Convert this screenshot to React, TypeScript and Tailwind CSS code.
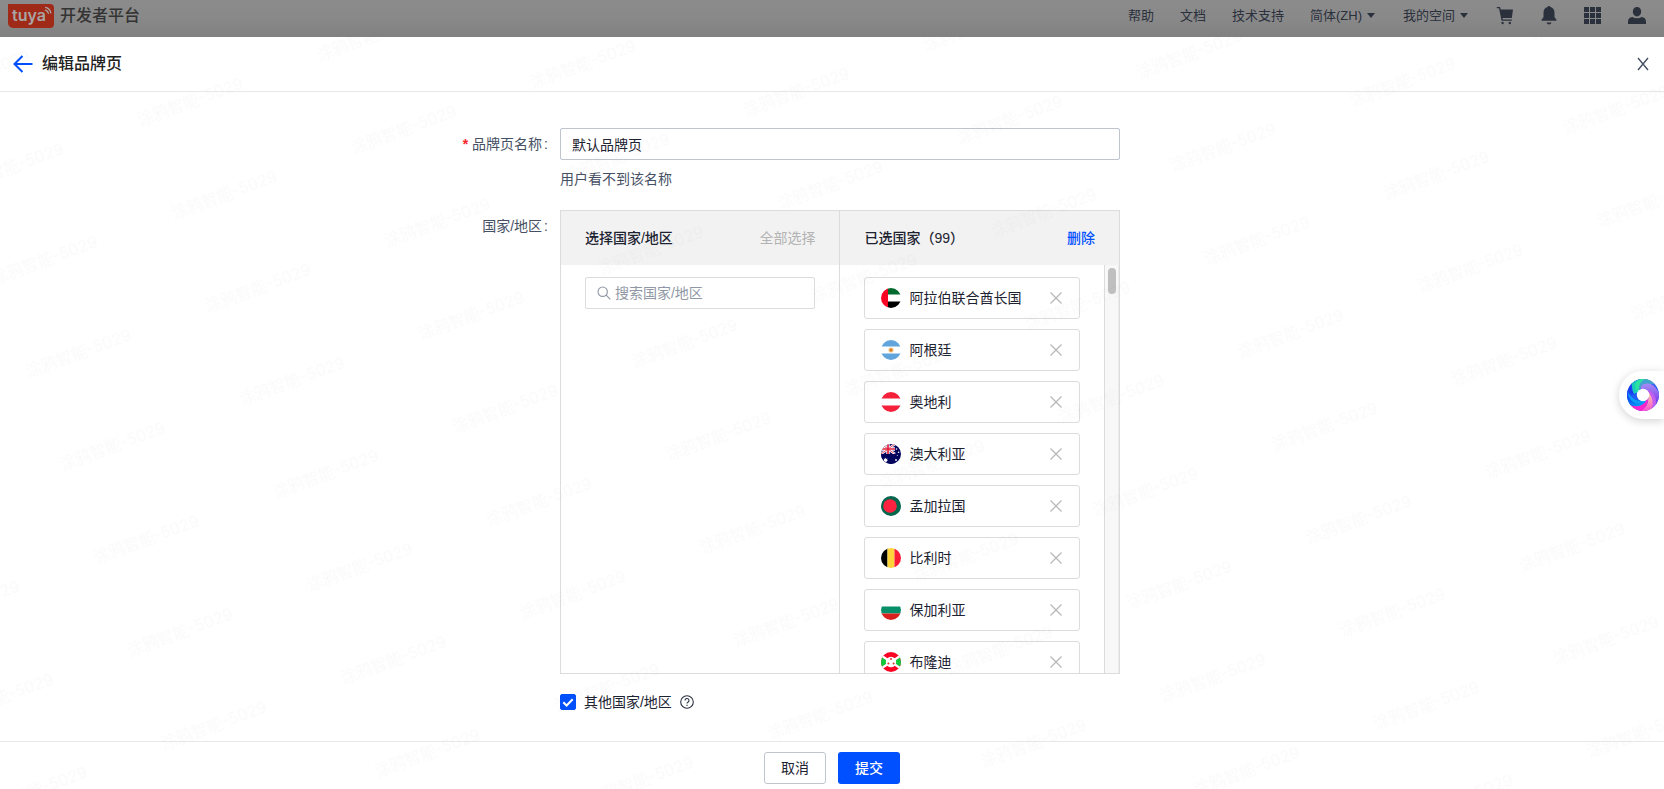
import { useState } from 'react';
import type { ReactNode } from 'react';

type Country = {
    name: string;
    flag: ReactNode;
};

const navLinks = ['帮助', '文档', '技术支持'];
const navMenus = ['简体(ZH)', '我的空间'];

const initialCountries: Country[] = [
    {
        name: '阿拉伯联合酋长国',
        flag: (
            <>
                <path fill="#fff" d="M0 0h20v20H0z" />
                <path fill="#046a2d" d="M7 0h13v6.5H7z" />
                <path fill="#000" d="M7 13.5h13V20H7z" />
                <path fill="#fb0524" d="M0 0h7v20H0z" />
            </>
        ),
    },
    {
        name: '阿根廷',
        flag: (
            <>
                <path fill="#fff" d="M0 0h20v20H0z" />
                <path fill="#62a5dc" d="M0 0h20v6.5H0zM0 13.5h20V20H0z" />
                <circle cx="10" cy="10" r="2.6" fill="#f5cf94" />
                <circle cx="10" cy="10" r="1.7" fill="#dc8227" />
            </>
        ),
    },
    {
        name: '奥地利',
        flag: (
            <>
                <path fill="#fff" d="M0 0h20v20H0z" />
                <path fill="#f5203a" d="M0 0h20v6.5H0zM0 13.5h20V20H0z" />
            </>
        ),
    },
    {
        name: '澳大利亚',
        flag: (
            <>
                <path fill="#03045c" d="M0 0h20v20H0z" />
                <path stroke="#fff" strokeWidth="2.4" d="M0 0l14 10M14 0L0 10" />
                <path stroke="#fff" strokeWidth="3.4" d="M7 0v10M0 5h14" />
                <path stroke="#e0203c" strokeWidth=".8" d="M0 0l14 10M14 0L0 10" />
                <path stroke="#e0203c" strokeWidth="1.7" d="M7 0v10M0 5h14" />
                <path fill="#03045c" d="M0 10h14v10H0z" />
                <path fill="#fff" d="M4.6 13.6l.6 1.3 1.4-.3-.6 1.3 1.1.9-1.4.3v1.5l-1.1-.9-1.2.9v-1.5l-1.3-.3 1.1-.9-.6-1.3 1.4.3z" />
                <g fill="#fff">
                    <circle cx="15.5" cy="5" r=".8" />
                    <circle cx="12.6" cy="9.4" r=".7" />
                    <circle cx="17.6" cy="8.2" r=".8" />
                    <circle cx="16.3" cy="11.2" r=".5" />
                    <circle cx="15" cy="16" r=".9" />
                </g>
            </>
        ),
    },
    {
        name: '孟加拉国',
        flag: (
            <>
                <path fill="#03664d" d="M0 0h20v20H0z" />
                <circle cx="9" cy="10" r="6.8" fill="#fc2340" />
            </>
        ),
    },
    {
        name: '比利时',
        flag: (
            <>
                <path fill="#000" d="M0 0h6.5v20H0z" />
                <path fill="#ffd33a" d="M6.5 0h7v20h-7z" />
                <path fill="#fb1b37" d="M13.5 0H20v20h-6.5z" />
            </>
        ),
    },
    {
        name: '保加利亚',
        flag: (
            <>
                <path fill="#fff" d="M0 0h20v6.5H0z" />
                <path fill="#06906a" d="M0 6.5h20v7H0z" />
                <path fill="#d9221d" d="M0 13.5h20V20H0z" />
            </>
        ),
    },
    {
        name: '布隆迪',
        flag: (
            <>
                <path fill="#fb0524" d="M0 0h20v20H0z" />
                <path fill="#0ccb3b" d="M-2 3l10 7-10 7zM22 3l-10 7 10 7z" />
                <path stroke="#fff" strokeWidth="2.4" d="M-2 2l24 16M22 2L-2 18" />
                <circle cx="10" cy="10" r="5.2" fill="#fff" />
                <g fill="#d8342c">
                    <circle cx="10" cy="7" r="1" />
                    <circle cx="7.4" cy="11.6" r="1" />
                    <circle cx="12.6" cy="11.6" r="1" />
                </g>
            </>
        ),
    },
];

function TuyaLogo() {
    return (
        <svg className="h-6 w-[46px]" viewBox="0 0 46 24" role="img" aria-label="tuya">
            <path fill="#a02a18" d="M0 0h42a4 4 0 0 1 4 4v16a4 4 0 0 1-4 4H5a5 5 0 0 1-5-5z" />
            <text x="4" y="17" fill="#a9a5a4" fontFamily="Inter, sans-serif" fontSize="16" fontWeight="600">tuya</text>
            <g fill="none" stroke="#a9a5a4" strokeWidth="1.3" strokeLinecap="round">
                <path d="M37.4 6.2a4.400 4.400 0 0 1 3 3.200" />
                <path d="M37.600 3.400a7.200 7.200 0 0 1 5.200 5.400" />
            </g>
        </svg>
    );
}

function TopBar() {
    return (
        <header className="flex h-[37px] shrink-0 items-start justify-between bg-linear-to-b from-[#8b8b8b] via-[#898989] to-[#808080] pt-1 pr-[18px] pl-2 text-[#2b303d]">
            <a href="#home" className="flex h-6 items-center gap-[6px] text-[#333]">
                <TuyaLogo />
                <span className="text-base font-medium">开发者平台</span>
            </a>
            <nav className="flex h-6 items-center gap-[26px] text-[13px]">
                {navLinks.map((label) => (
                    <a key={label} href="#nav">{label}</a>
                ))}
                {navMenus.map((label) => (
                    <button key={label} type="button" className="flex items-center gap-[5px]">
                        {label}
                        <svg className="size-[10px]" viewBox="0 0 10 10" fill="currentColor">
                            <path d="M0 2h8L4 7z" />
                        </svg>
                    </button>
                ))}
                {/* Cart */}
                <button type="button" aria-label="购物车">
                    <svg className="size-[18px]" viewBox="0 0 18 18" fill="currentColor">
                        <path d="M.8 0h3.200l.7 2.600H17l-1.200 8.400H6.500l.3 1.500h9v1.200H5.600L3 1.200H.8z" />
                        <circle cx="6.600" cy="16" r="1.200" />
                        <circle cx="13.800" cy="16" r="1.200" />
                    </svg>
                </button>
                {/* Notifications */}
                <button type="button" aria-label="消息">
                    <svg className="size-[18px] overflow-visible" viewBox="0 0 18 18" fill="currentColor">
                        <path d="M9 -1c.8 0 1.300.4 1.500 1C13 .7 14.500 2.800 14.500 5.600V10.300l1.900 2.300V13.800H1.600v-1.200l1.900-2.300V5.600C3.500 2.800 5 .7 7.500 0 7.700-.6 8.200-1 9-1zM6.500 15.600h5c-.3 1.300-1.300 2-2.500 2s-2.200-.7-2.500-2z" />
                    </svg>
                </button>
                {/* Apps */}
                <button type="button" aria-label="应用">
                    <svg className="size-[18px]" viewBox="0 0 18 18" fill="currentColor">
                        <path d="M0 0h5v5H0zM6 0h5v5H6zM12 0h5v5h-5zM0 6h5v5H0zM6 6h5v5H6zM12 6h5v5h-5zM0 12h5v5H0zM6 12h5v5H6zM12 12h5v5h-5z" />
                    </svg>
                </button>
                {/* Account */}
                <button type="button" aria-label="账号">
                    <svg className="size-[18px]" viewBox="0 0 18 18" fill="currentColor">
                        <path d="M9 0c2.500 0 4.200 1.900 4.200 4.600S11.400 9.400 9 9.400 4.800 7.300 4.800 4.600 6.500 0 9 0zM0 17v-2.600c0-2.400 1.800-4.200 4.400-4.400 1.300.8 2.800 1.200 4.600 1.200s3.300-.4 4.600-1.200c2.600.2 4.400 2 4.400 4.400V17z" />
                    </svg>
                </button>
            </nav>
        </header>
    );
}

// Faint repeated text laid over the whole drawer
function Watermark() {
    return (
        <svg className="pointer-events-none absolute inset-0 h-full w-full" aria-hidden="true">
            <defs>
                <pattern id="watermark" width="191" height="99" patternUnits="userSpaceOnUse" patternTransform="translate(123 42) rotate(-20)">
                    <text x="0" y="50" fill="#000" fillOpacity=".02" fontSize="16" fontFamily="Inter, 'Noto Sans CJK SC', sans-serif">涂鸦智能-5029</text>
                </pattern>
            </defs>
            <rect width="100%" height="100%" fill="url(#watermark)" />
        </svg>
    );
}

function CountryCard({ name, flag, onRemove }: Country & { onRemove: () => void }) {
    return (
        <li className="flex h-[42px] shrink-0 items-center gap-2 rounded-[3px] border border-[#dcdcdc] px-4">
            <svg className="size-5 rounded-full" viewBox="0 0 20 20" fill="none">{flag}</svg>
            <span className="flex-1">{name}</span>
            <button type="button" aria-label={`移除${name}`} onClick={onRemove}>
                <svg className="size-[14px]" viewBox="0 0 14 14" fill="none" stroke="#b8b8b8" strokeWidth="1.3">
                    <path d="M1.500 1.500l11 11M12.500 1.500l-11 11" />
                </svg>
            </button>
        </li>
    );
}

function CountryTransfer() {
    const [countries, setCountries] = useState(initialCountries);

    return (
        <div className="flex h-[464px] w-[560px] border border-[#dcdcdc]">
            {/* Available */}
            <section className="flex flex-1 flex-col border-r border-[#dcdcdc]">
                <div className="flex h-[54px] items-center justify-between bg-[#f2f2f2] px-6">
                    <h2 className="font-medium">选择国家/地区</h2>
                    <button type="button" className="text-[#b3b3b3]">全部选择</button>
                </div>
                <div className="px-6 pt-3">
                    <label className="flex h-8 items-center gap-1 rounded-[2px] border border-[#dcdcdc] px-[11px]">
                        <svg className="size-[14px] shrink-0" viewBox="0 0 14 14" fill="none" stroke="#8f96a3" strokeWidth="1.1">
                            <circle cx="5.700" cy="5.700" r="4.700" />
                            <path d="M9.200 9.200l4.100 4.100" />
                        </svg>
                        <input
                            type="text"
                            aria-label="搜索国家/地区"
                            placeholder="搜索国家/地区"
                            className="w-full min-w-0 outline-none placeholder:text-[#9097a5]"
                        />
                    </label>
                </div>
            </section>

            {/* Selected */}
            <section className="flex min-h-0 flex-1 flex-col">
                <div className="flex h-[54px] shrink-0 items-center justify-between bg-[#f2f2f2] px-6">
                    <h2 className="font-medium">已选国家（99）</h2>
                    <button type="button" className="font-medium text-[#0050ff]" onClick={() => setCountries([])}>删除</button>
                </div>
                <div className="flex min-h-0 flex-1">
                    <ul className="flex flex-1 flex-col gap-[10px] overflow-hidden px-6 pt-3">
                        {countries.map((country) => (
                            <CountryCard
                                key={country.name}
                                {...country}
                                onRemove={() => setCountries(countries.filter((c) => c.name !== country.name))}
                            />
                        ))}
                    </ul>
                    {/* Scroll track */}
                    <div className="flex w-[15px] justify-end border-x border-l-[#dcdcdc] border-r-[#ececec] bg-[#f8f8f8] pt-[3px] pr-[2px]">
                        <div className="h-[26px] w-2 rounded-full bg-[#bfbfbf]" />
                    </div>
                </div>
            </section>
        </div>
    );
}

function AssistantButton() {
    return (
        <button type="button" aria-label="助手" className="fixed top-[371px] right-0 flex h-12 w-[45px] items-center rounded-l-full bg-white pl-2 shadow-[0_2px_10px_rgba(0,0,0,0.18)]">
            <svg className="size-8" viewBox="-16 -16 32 32">
                <defs>
                    <linearGradient id="bladeGreen" x1="0" y1="0" x2="1" y2="0">
                        <stop offset="0" stopColor="#16c8c0" />
                        <stop offset="1" stopColor="#25e49b" />
                    </linearGradient>
                    <linearGradient id="bladePurple" x1="0" y1="0" x2="0" y2="1">
                        <stop offset="0" stopColor="#a58cf5" />
                        <stop offset="1" stopColor="#7b35e8" />
                    </linearGradient>
                    <linearGradient id="bladePink" x1="0" y1="0" x2="0" y2="1">
                        <stop offset="0" stopColor="#fbd0a8" />
                        <stop offset="1" stopColor="#ff4fd0" />
                    </linearGradient>
                    <linearGradient id="bladeBlue" x1="0" y1="0" x2="1" y2="1">
                        <stop offset="0" stopColor="#0638f0" />
                        <stop offset="1" stopColor="#0bb8f5" />
                    </linearGradient>
                </defs>
                <circle r="16" fill="#1f5df5" />
                <path fill="#1a3ff0" d="M-13.900-8A16 16 0 0 1 0-16C-5-14-9-8-7-1L-16 0A16 16 0 0 1-13.900-8z" />
                <path fill="url(#bladeGreen)" d="M-11.300-11.300A16 16 0 0 1 8-13.900C2-12-3-9-5-3L-9-1C-11-5-11-8-11.300-11.300z" />
                <path fill="#2ae3a0" d="M-4-15.500A16 16 0 0 1 11.300-11.300C4-11-2-9-5-3-9-6-9-12-4-15.500z" />
                <path fill="#5b6cf2" d="M2-15.900A16 16 0 0 1 13.900-8C7-11-1-10-4-4-5-9-2-14 2-15.900z" fillOpacity=".55" />
                <path fill="url(#bladePurple)" d="M-2-9C4-14 12-11 15.900-2A16 16 0 0 1 13 9.300C13 2 8-5-2-5z" />
                <path fill="#c05df0" d="M2-5C9-5 14 0 13 9.300A16 16 0 0 1 8 13.900C10 6 8 0 2-5z" />
                <path fill="url(#bladePink)" d="M5-3C10 2 11 9 8 13.900A16 16 0 0 1-2 15.900C4 12 6 6 5 0z" />
                <path fill="#ff22cf" d="M5 2C6 8 2 14-2 15.900A16 16 0 0 1-12.500 10C-5 11 1 9 5 2z" />
                <path fill="url(#bladeBlue)" d="M-16 0C-12 7-3 10 4 4 1 11-6 13-12.500 10A16 16 0 0 1-16 0z" />
                <path fill="#0c9df7" d="M-15.500-4C-12 4-4 8 2 5-6 12-14 7-15.500-4z" />
                <circle r="6.200" fill="#fff" />
            </svg>
        </button>
    );
}

export default function App() {
    const [name, setName] = useState('默认品牌页');
    const [others, setOthers] = useState(true);

    return (
        <div className="flex min-h-screen flex-col bg-white font-['Liberation_Sans','Noto_Sans_CJK_SC',sans-serif] text-sm text-[#1d2331]">
            <TopBar />

            <main className="relative flex flex-1 flex-col">
                {/* Title */}
                <div className="flex h-[55px] items-center justify-between border-b border-[#e8e8e8] pr-[14px] pl-3">
                    <div className="flex items-center gap-2">
                        <button type="button" aria-label="返回">
                            <svg className="h-[18px] w-[22px]" viewBox="0 0 22 18" fill="none" stroke="#0050ff" strokeWidth="2">
                                <path d="M10.500 1l-8 8 8 8M2.500 9h18" />
                            </svg>
                        </button>
                        <h1 className="text-base font-medium text-[#222]">编辑品牌页</h1>
                    </div>
                    <button type="button" aria-label="关闭">
                        <svg className="size-[14px]" viewBox="0 0 14 14" fill="none" stroke="#465064" strokeWidth="1.4">
                            <path d="M2 1l10 12M12 1L2 13" />
                        </svg>
                    </button>
                </div>

                {/* Form */}
                <form id="brand-form" className="flex flex-1 flex-col pt-9 pl-2" onSubmit={(e) => e.preventDefault()}>
                    <div className="mb-5 flex">
                        <label htmlFor="brand-name" className="flex h-8 w-1/3 items-center justify-end gap-1 pr-3 text-[#465064]">
                            <span className="font-bold text-[#f5222d]">*</span>
                            <span>品牌页名称<span className="ml-0.5">:</span></span>
                        </label>
                        <div>
                            <input
                                id="brand-name"
                                type="text"
                                value={name}
                                onChange={(e) => setName(e.target.value)}
                                className="block h-8 w-[560px] rounded-[2px] border border-[#c0c4cc] px-[11px] outline-none"
                            />
                            <p className="mt-2 leading-[22px] text-[#465064]">用户看不到该名称</p>
                        </div>
                    </div>

                    <div className="flex">
                        <div className="flex h-8 w-1/3 items-center justify-end pr-3 text-[#465064]">
                            <span>国家/地区<span className="ml-0.5">:</span></span>
                        </div>
                        <div>
                            <CountryTransfer />
                            <div className="mt-4 flex h-6 items-center gap-2">
                                <label className="flex items-center gap-2">
                                    <span className="relative flex size-4">
                                        <input
                                            type="checkbox"
                                            checked={others}
                                            onChange={(e) => setOthers(e.target.checked)}
                                            className="size-4 appearance-none rounded-[2px] border border-[#c0c4cc] checked:border-[#0050ff] checked:bg-[#0050ff]"
                                        />
                                        {others && (
                                            <svg className="pointer-events-none absolute inset-0 size-4" viewBox="0 0 16 16" fill="none" stroke="#fff" strokeWidth="2">
                                                <path d="M3.300 8.200l3.300 3.300 6.100-6.200" />
                                            </svg>
                                        )}
                                    </span>
                                    其他国家/地区
                                </label>
                                <svg className="size-[14px]" viewBox="0 0 14 14" fill="none" stroke="#2a3040" strokeWidth="1.100">
                                    <circle cx="7" cy="7" r="6.300" />
                                    <path d="M5 5.500a2 2 0 1 1 2.900 1.800c-.6.300-.9.600-.9 1.300M7 9.700v1.200" />
                                </svg>
                            </div>
                        </div>
                    </div>
                </form>

                {/* Actions */}
                <footer className="flex h-12 items-start justify-center gap-3 border-t border-[#e8e8e8] pt-[10px]">
                    <button type="button" className="h-8 w-[62px] rounded-[3px] border border-[#c0c4cc] bg-white">取消</button>
                    <button type="submit" form="brand-form" className="h-8 w-[62px] rounded-[3px] bg-[#0050ff] font-medium text-white">提交</button>
                </footer>

                <Watermark />
            </main>

            <AssistantButton />
        </div>
    );
}
